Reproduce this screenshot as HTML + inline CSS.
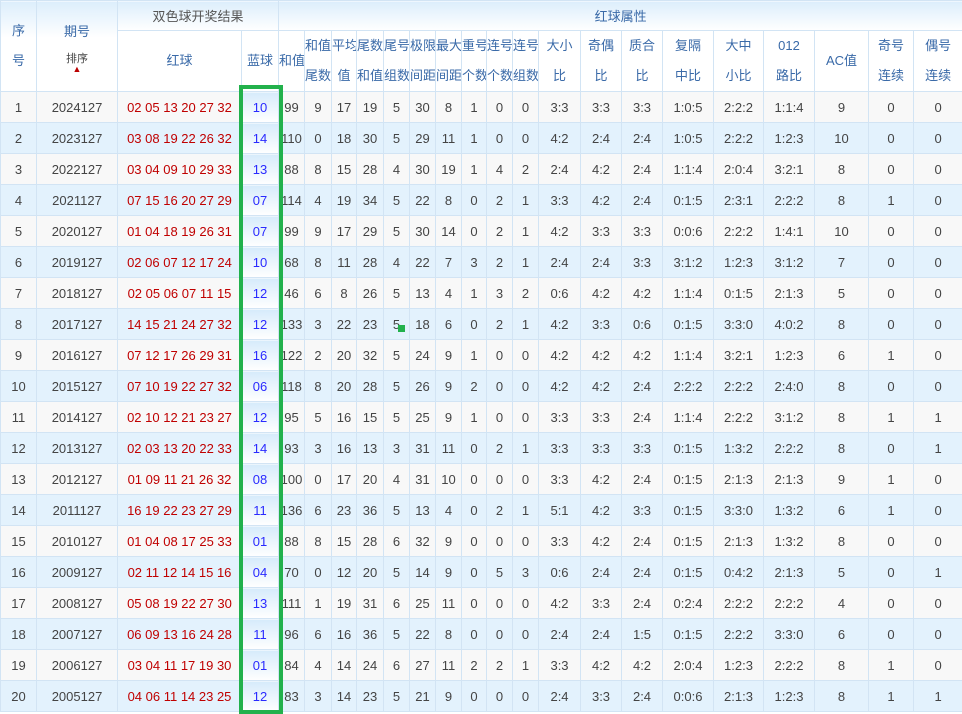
<!DOCTYPE html>
<html><head><meta charset="utf-8"><style>
body{margin:0;background:#fff;font-family:"Liberation Sans","Noto Sans CJK SC",sans-serif;}
table{border-collapse:collapse;table-layout:fixed;width:962px;position:absolute;left:0;top:0;}
td,th{border:1px solid #d2e4f4;text-align:center;padding:0;font-size:13px;color:#444;font-weight:normal;overflow:hidden;white-space:nowrap}
thead th{background:linear-gradient(#dceefc,#fff 40%);color:#3a6aa8;}
thead tr.h2 th{background:#fff;line-height:30px;}
th.top{color:#555;height:29px;background:linear-gradient(#dceefc,#fff)!important}
tbody tr{height:31px}
tbody tr:nth-child(odd) td{background:#f8f8f8}
tbody tr:nth-child(even) td{background:#e3f2fd}
td.r{color:#c00000}
tbody td.b{color:#2a2aff;background:linear-gradient(#d6ebfb,#fff)!important}
.box{position:absolute;left:239px;top:85px;width:36px;height:621px;border:4px solid #22b14c}
.dot{position:absolute;left:398px;top:325px;width:7px;height:7px;background:#22b14c}
</style></head><body>
<table>
<colgroup><col width="36"><col width="81"><col width="124"><col width="37"><col width="26"><col width="27"><col width="25"><col width="27"><col width="26"><col width="26"><col width="26"><col width="25"><col width="26"><col width="26"><col width="42"><col width="41"><col width="41"><col width="51"><col width="50"><col width="51"><col width="54"><col width="45"><col width="49"></colgroup>
<thead>
<tr><th rowspan="2" style="line-height:30px">序<br>号</th><th rowspan="2" style="vertical-align:top"><div style="margin-top:22px;line-height:18px">期号</div><div style="font-size:11px;color:#444;margin-top:12px;line-height:12px">排序</div><div style="color:#b00;font-size:9px;line-height:8px">▲</div></th><th colspan="2" class="top">双色球开奖结果</th><th colspan="19" class="top" style="color:#3a6aa8">红球属性</th></tr>
<tr class="h2" style="height:61px"><th>红球</th><th>蓝球</th><th>和值</th><th>和值<br>尾数</th><th>平均<br>值</th><th>尾数<br>和值</th><th>尾号<br>组数</th><th>极限<br>间距</th><th>最大<br>间距</th><th>重号<br>个数</th><th>连号<br>个数</th><th>连号<br>组数</th><th>大小<br>比</th><th>奇偶<br>比</th><th>质合<br>比</th><th>复隔<br>中比</th><th>大中<br>小比</th><th>012<br>路比</th><th>AC值</th><th>奇号<br>连续</th><th>偶号<br>连续</th></tr>
</thead>
<tbody>
<tr><td>1</td><td>2024127</td><td class="r">02 05 13 20 27 32</td><td class="b">10</td><td>99</td><td>9</td><td>17</td><td>19</td><td>5</td><td>30</td><td>8</td><td>1</td><td>0</td><td>0</td><td>3:3</td><td>3:3</td><td>3:3</td><td>1:0:5</td><td>2:2:2</td><td>1:1:4</td><td>9</td><td>0</td><td>0</td></tr>
<tr><td>2</td><td>2023127</td><td class="r">03 08 19 22 26 32</td><td class="b">14</td><td>110</td><td>0</td><td>18</td><td>30</td><td>5</td><td>29</td><td>11</td><td>1</td><td>0</td><td>0</td><td>4:2</td><td>2:4</td><td>2:4</td><td>1:0:5</td><td>2:2:2</td><td>1:2:3</td><td>10</td><td>0</td><td>0</td></tr>
<tr><td>3</td><td>2022127</td><td class="r">03 04 09 10 29 33</td><td class="b">13</td><td>88</td><td>8</td><td>15</td><td>28</td><td>4</td><td>30</td><td>19</td><td>1</td><td>4</td><td>2</td><td>2:4</td><td>4:2</td><td>2:4</td><td>1:1:4</td><td>2:0:4</td><td>3:2:1</td><td>8</td><td>0</td><td>0</td></tr>
<tr><td>4</td><td>2021127</td><td class="r">07 15 16 20 27 29</td><td class="b">07</td><td>114</td><td>4</td><td>19</td><td>34</td><td>5</td><td>22</td><td>8</td><td>0</td><td>2</td><td>1</td><td>3:3</td><td>4:2</td><td>2:4</td><td>0:1:5</td><td>2:3:1</td><td>2:2:2</td><td>8</td><td>1</td><td>0</td></tr>
<tr><td>5</td><td>2020127</td><td class="r">01 04 18 19 26 31</td><td class="b">07</td><td>99</td><td>9</td><td>17</td><td>29</td><td>5</td><td>30</td><td>14</td><td>0</td><td>2</td><td>1</td><td>4:2</td><td>3:3</td><td>3:3</td><td>0:0:6</td><td>2:2:2</td><td>1:4:1</td><td>10</td><td>0</td><td>0</td></tr>
<tr><td>6</td><td>2019127</td><td class="r">02 06 07 12 17 24</td><td class="b">10</td><td>68</td><td>8</td><td>11</td><td>28</td><td>4</td><td>22</td><td>7</td><td>3</td><td>2</td><td>1</td><td>2:4</td><td>2:4</td><td>3:3</td><td>3:1:2</td><td>1:2:3</td><td>3:1:2</td><td>7</td><td>0</td><td>0</td></tr>
<tr><td>7</td><td>2018127</td><td class="r">02 05 06 07 11 15</td><td class="b">12</td><td>46</td><td>6</td><td>8</td><td>26</td><td>5</td><td>13</td><td>4</td><td>1</td><td>3</td><td>2</td><td>0:6</td><td>4:2</td><td>4:2</td><td>1:1:4</td><td>0:1:5</td><td>2:1:3</td><td>5</td><td>0</td><td>0</td></tr>
<tr><td>8</td><td>2017127</td><td class="r">14 15 21 24 27 32</td><td class="b">12</td><td>133</td><td>3</td><td>22</td><td>23</td><td>5</td><td>18</td><td>6</td><td>0</td><td>2</td><td>1</td><td>4:2</td><td>3:3</td><td>0:6</td><td>0:1:5</td><td>3:3:0</td><td>4:0:2</td><td>8</td><td>0</td><td>0</td></tr>
<tr><td>9</td><td>2016127</td><td class="r">07 12 17 26 29 31</td><td class="b">16</td><td>122</td><td>2</td><td>20</td><td>32</td><td>5</td><td>24</td><td>9</td><td>1</td><td>0</td><td>0</td><td>4:2</td><td>4:2</td><td>4:2</td><td>1:1:4</td><td>3:2:1</td><td>1:2:3</td><td>6</td><td>1</td><td>0</td></tr>
<tr><td>10</td><td>2015127</td><td class="r">07 10 19 22 27 32</td><td class="b">06</td><td>118</td><td>8</td><td>20</td><td>28</td><td>5</td><td>26</td><td>9</td><td>2</td><td>0</td><td>0</td><td>4:2</td><td>4:2</td><td>2:4</td><td>2:2:2</td><td>2:2:2</td><td>2:4:0</td><td>8</td><td>0</td><td>0</td></tr>
<tr><td>11</td><td>2014127</td><td class="r">02 10 12 21 23 27</td><td class="b">12</td><td>95</td><td>5</td><td>16</td><td>15</td><td>5</td><td>25</td><td>9</td><td>1</td><td>0</td><td>0</td><td>3:3</td><td>3:3</td><td>2:4</td><td>1:1:4</td><td>2:2:2</td><td>3:1:2</td><td>8</td><td>1</td><td>1</td></tr>
<tr><td>12</td><td>2013127</td><td class="r">02 03 13 20 22 33</td><td class="b">14</td><td>93</td><td>3</td><td>16</td><td>13</td><td>3</td><td>31</td><td>11</td><td>0</td><td>2</td><td>1</td><td>3:3</td><td>3:3</td><td>3:3</td><td>0:1:5</td><td>1:3:2</td><td>2:2:2</td><td>8</td><td>0</td><td>1</td></tr>
<tr><td>13</td><td>2012127</td><td class="r">01 09 11 21 26 32</td><td class="b">08</td><td>100</td><td>0</td><td>17</td><td>20</td><td>4</td><td>31</td><td>10</td><td>0</td><td>0</td><td>0</td><td>3:3</td><td>4:2</td><td>2:4</td><td>0:1:5</td><td>2:1:3</td><td>2:1:3</td><td>9</td><td>1</td><td>0</td></tr>
<tr><td>14</td><td>2011127</td><td class="r">16 19 22 23 27 29</td><td class="b">11</td><td>136</td><td>6</td><td>23</td><td>36</td><td>5</td><td>13</td><td>4</td><td>0</td><td>2</td><td>1</td><td>5:1</td><td>4:2</td><td>3:3</td><td>0:1:5</td><td>3:3:0</td><td>1:3:2</td><td>6</td><td>1</td><td>0</td></tr>
<tr><td>15</td><td>2010127</td><td class="r">01 04 08 17 25 33</td><td class="b">01</td><td>88</td><td>8</td><td>15</td><td>28</td><td>6</td><td>32</td><td>9</td><td>0</td><td>0</td><td>0</td><td>3:3</td><td>4:2</td><td>2:4</td><td>0:1:5</td><td>2:1:3</td><td>1:3:2</td><td>8</td><td>0</td><td>0</td></tr>
<tr><td>16</td><td>2009127</td><td class="r">02 11 12 14 15 16</td><td class="b">04</td><td>70</td><td>0</td><td>12</td><td>20</td><td>5</td><td>14</td><td>9</td><td>0</td><td>5</td><td>3</td><td>0:6</td><td>2:4</td><td>2:4</td><td>0:1:5</td><td>0:4:2</td><td>2:1:3</td><td>5</td><td>0</td><td>1</td></tr>
<tr><td>17</td><td>2008127</td><td class="r">05 08 19 22 27 30</td><td class="b">13</td><td>111</td><td>1</td><td>19</td><td>31</td><td>6</td><td>25</td><td>11</td><td>0</td><td>0</td><td>0</td><td>4:2</td><td>3:3</td><td>2:4</td><td>0:2:4</td><td>2:2:2</td><td>2:2:2</td><td>4</td><td>0</td><td>0</td></tr>
<tr><td>18</td><td>2007127</td><td class="r">06 09 13 16 24 28</td><td class="b">11</td><td>96</td><td>6</td><td>16</td><td>36</td><td>5</td><td>22</td><td>8</td><td>0</td><td>0</td><td>0</td><td>2:4</td><td>2:4</td><td>1:5</td><td>0:1:5</td><td>2:2:2</td><td>3:3:0</td><td>6</td><td>0</td><td>0</td></tr>
<tr><td>19</td><td>2006127</td><td class="r">03 04 11 17 19 30</td><td class="b">01</td><td>84</td><td>4</td><td>14</td><td>24</td><td>6</td><td>27</td><td>11</td><td>2</td><td>2</td><td>1</td><td>3:3</td><td>4:2</td><td>4:2</td><td>2:0:4</td><td>1:2:3</td><td>2:2:2</td><td>8</td><td>1</td><td>0</td></tr>
<tr><td>20</td><td>2005127</td><td class="r">04 06 11 14 23 25</td><td class="b">12</td><td>83</td><td>3</td><td>14</td><td>23</td><td>5</td><td>21</td><td>9</td><td>0</td><td>0</td><td>0</td><td>2:4</td><td>3:3</td><td>2:4</td><td>0:0:6</td><td>2:1:3</td><td>1:2:3</td><td>8</td><td>1</td><td>1</td></tr>
</tbody>
</table>
<div class="box"></div>
<div class="dot"></div>
</body></html>
